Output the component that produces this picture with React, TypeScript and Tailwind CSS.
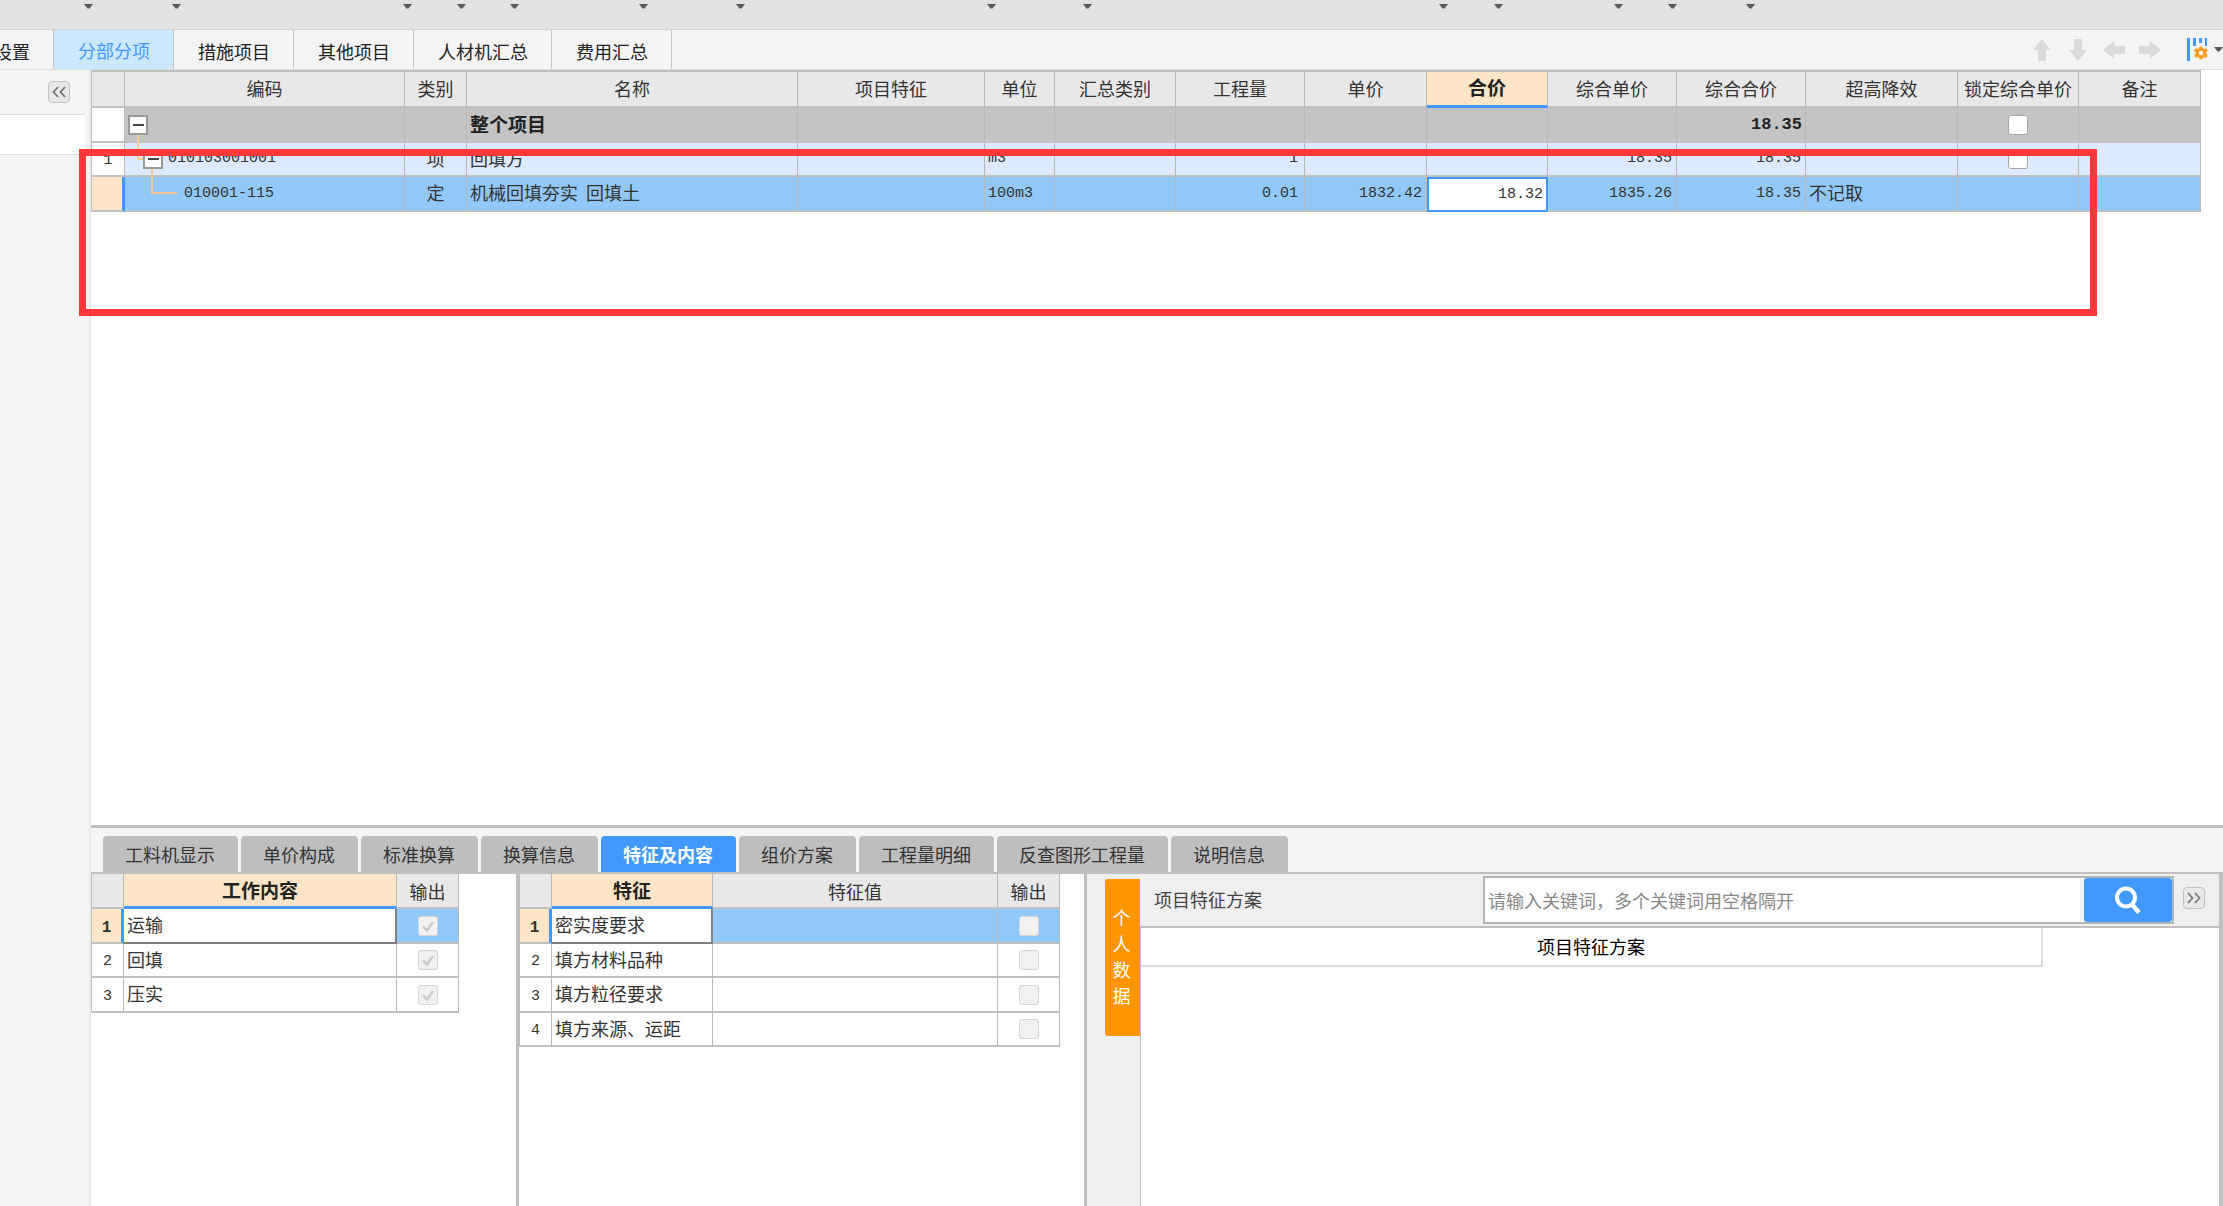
import React from "react";

const CJK = "font-['Noto_Sans_CJK_SC',sans-serif]";
const NUM = "font-['Liberation_Mono','Noto_Sans_CJK_SC',monospace] text-[15px]";

function Caret() {
  return (
    <svg width="9" height="5" viewBox="0 0 9 5" aria-hidden="true">
      <path d="M0 0H9L5.5 4.5H3.5Z" fill="#5a5a5a" />
    </svg>
  );
}

const TOOL_WIDTHS = [
  "w-[93px]", "w-[88px]", "w-[231px]", "w-[54px]", "w-[53px]", "w-[129px]", "w-[97px]",
  "w-[251px]", "w-[96px]", "w-[356px]", "w-[55px]", "w-[120px]", "w-[54px]", "w-[78px]",
];

function Toolbar() {
  return (
    <div className="flex h-[30px] border-b border-[#d2d2d2] bg-[#e2e2e2]">
      {TOOL_WIDTHS.map((w, i) => (
        <button key={i} type="button" aria-label="展开菜单" className={`flex h-full shrink-0 justify-end pt-[4px] ${w}`}>
          <Caret />
        </button>
      ))}
    </div>
  );
}

const ARROW = "M11 0L20 11H15V22H7V11H2Z";

function ArrowButton({ label, turn }: { label: string; turn: number }) {
  return (
    <button type="button" aria-label={label}>
      <svg width="22" height="22" viewBox="0 0 22 22" aria-hidden="true">
        <path d={ARROW} fill="#dadada" transform={`rotate(${turn} 11 11)`} />
      </svg>
    </button>
  );
}

function MainTabs() {
  const tabs = ["措施项目", "其他项目", "人材机汇总", "费用汇总"];
  return (
    <nav className="flex h-10 border-b border-[#dcdcdc] bg-[#f4f4f4] text-lg leading-6 text-[#222]">
      <button type="button" className="flex w-[54px] items-center justify-end overflow-hidden whitespace-nowrap border-r border-[#c4c4c4] pr-[23px] pt-[2px]">
        设置
      </button>
      <button type="button" className="border-r border-[#c4c4c4] bg-[#cce8ff] pl-6 pr-[23px] text-[#4199ff]">
        分部分项
      </button>
      {tabs.map((t) => (
        <button key={t} type="button" className="border-r border-[#c4c4c4] pl-6 pr-[23px] pt-[2px]">
          {t}
        </button>
      ))}
      <div className="ml-auto flex items-center gap-[14px]">
        <ArrowButton label="上移" turn={0} />
        <ArrowButton label="下移" turn={180} />
        <ArrowButton label="左移" turn={270} />
        <ArrowButton label="右移" turn={90} />
        <button type="button" aria-label="列设置" className="ml-3 flex items-center gap-[6px]">
          <svg width="21" height="23" viewBox="0 0 21 23" aria-hidden="true">
            <g fill="#4199ff">
              <rect x="0" y="0" width="3" height="23" />
              <rect x="6" y="0" width="3" height="8" />
              <rect x="12" y="0" width="3" height="5" />
              <rect x="18" y="0" width="2" height="8" />
            </g>
            <g stroke="#fd9d20" strokeWidth="4" strokeLinecap="round">
              <path d="M14 10.500V19.500M9.500 12.500L18.500 17.500M18.500 12.500L9.500 17.500" />
            </g>
            <circle cx="14" cy="15" r="5" fill="#fd9d20" />
            <circle cx="14" cy="15" r="2.3" fill="#f4f4f4" />
          </svg>
          <Caret />
        </button>
      </div>
    </nav>
  );
}

function ChevronButton({ label, right }: { label: string; right?: boolean }) {
  return (
    <button
      type="button"
      aria-label={label}
      className="flex h-[22px] w-[22px] shrink-0 items-center justify-center rounded-[4px] border border-[#c2c2c2] bg-[#e8e8e8]"
    >
      <svg width="14" height="12" viewBox="0 0 14 12" fill="none" stroke="#777" strokeWidth="1.8" aria-hidden="true">
        {right ? <path d="M1 1L5.5 6L1 11M8 1L12.500 6L8 11" /> : <path d="M6 1L1.500 6L6 11M13 1L8.500 6L13 11" />}
      </svg>
    </button>
  );
}

function Sidebar() {
  return (
    <aside className="w-[91px] shrink-0 border-r-2 border-[#e9e9e9] bg-[#f4f4f4]">
      <div className="flex h-[44px] items-center justify-end pr-[19px]">
        <ChevronButton label="收起" />
      </div>
      <div className="mr-1 h-[41px] border-y border-[#dcdcdc] bg-white" />
    </aside>
  );
}

function Check({ label, checked, disabled }: { label: string; checked?: boolean; disabled?: boolean }) {
  return (
    <label className="relative mx-auto block h-5 w-5">
      <input
        type="checkbox"
        aria-label={label}
        defaultChecked={checked}
        disabled={disabled}
        className="block h-5 w-5 appearance-none rounded-[3px] border border-[#a6a6a6] bg-white disabled:border-[#d6d6d6] disabled:bg-[#f1f1f1]"
      />
      {checked && (
        <svg className="absolute inset-0" width="20" height="20" viewBox="0 0 20 20" fill="none" aria-hidden="true">
          <path d="M5 10.500L9 14.500L15 6" stroke="#cccccc" strokeWidth="2.5" />
        </svg>
      )}
    </label>
  );
}

const COLS = [
  ["", "w-[33px]"], ["编码", "w-[280px]"], ["类别", "w-[62px]"], ["名称", "w-[331px]"],
  ["项目特征", "w-[187px]"], ["单位", "w-[70px]"], ["汇总类别", "w-[121px]"], ["工程量", "w-[129px]"],
  ["单价", "w-[122px]"], ["合价", "w-[121px]"], ["综合单价", "w-[129px]"], ["综合合价", "w-[129px]"],
  ["超高降效", "w-[152px]"], ["锁定综合单价", "w-[121px]"], ["备注", "w-[122px]"],
];

const LINE = "border-r border-b-2 border-b-[#c0c0c0] border-r-[#b8b8b8]";

function TreeToggle() {
  return (
    <button type="button" aria-label="折叠" className="relative flex h-5 w-5 items-center justify-center border-2 border-[#999] bg-white">
      <span className="h-[2px] w-[11px] bg-[#444]" />
    </button>
  );
}

function TreeLines({ d }: { d: string }) {
  return (
    <svg className="absolute left-0 top-0" width="60" height="36" viewBox="0 0 60 36" fill="none" aria-hidden="true">
      <path d={d} stroke="#f6cb92" strokeWidth="2" />
    </svg>
  );
}

function CostTable() {
  return (
    <table className="w-full table-fixed border-separate border-spacing-0 border-l border-t-2 border-[#c0c0c0] text-lg leading-6 text-[#333]">
      <colgroup>
        {COLS.map(([name, w]) => (
          <col key={name || "index"} className={w} />
        ))}
      </colgroup>
      <thead>
        <tr className="h-[36px]">
          {COLS.map(([name]) =>
            name === "合价" ? (
              <th key={name} className="whitespace-nowrap border-b-[3px] border-r border-b-[#4199ff] border-r-[#b8b8b8] bg-[#fee5c8] pb-[4px] text-[19px] font-bold text-[#222]">
                {name}
              </th>
            ) : (
              <th key={name || "index"} className={`${LINE} whitespace-nowrap bg-[#e8e8e8] pb-[2px] font-normal`}>
                {name}
              </th>
            )
          )}
        </tr>
      </thead>
      <tbody>
        <tr className="h-[35px] bg-[#c4c4c4] font-bold text-[#222]">
          <td className={`${LINE} bg-white`} />
          <td className={`${LINE} relative pl-[3px]`}>
            <TreeLines d="M13 26V35" />
            <TreeToggle />
          </td>
          <td className={LINE} />
          <td className={`${LINE} pb-[2px] pl-[3px] text-[19px]`}>整个项目</td>
          <td className={LINE} />
          <td className={LINE} />
          <td className={LINE} />
          <td className={LINE} />
          <td className={LINE} />
          <td className={LINE} />
          <td className={LINE} />
          <td className={`${LINE} pr-[3px] text-right font-['Liberation_Mono',monospace] text-[17px]`}>18.35</td>
          <td className={LINE} />
          <td className={LINE}><Check label="锁定综合单价 整个项目" /></td>
          <td className={LINE} />
        </tr>
        <tr className="h-[34px] bg-[#dce9fe]">
          <td className={`${LINE} bg-white pt-1 text-center ${NUM}`}>1</td>
          <td className={`${LINE} relative pl-[18px]`}>
            <TreeLines d="M13 -2V16H20M27 24V34" />
            <div className={`flex items-center gap-[5px] ${NUM}`}>
              <TreeToggle />
              <span>010103001001</span>
            </div>
          </td>
          <td className={`${LINE} pb-[2px] text-center`}>项</td>
          <td className={`${LINE} pb-[2px] pl-[3px]`}>回填方</td>
          <td className={LINE} />
          <td className={`${LINE} pl-[3px] ${NUM}`}>m3</td>
          <td className={LINE} />
          <td className={`${LINE} pr-[6px] text-right ${NUM}`}>1</td>
          <td className={LINE} />
          <td className={LINE} />
          <td className={`${LINE} pr-[4px] text-right ${NUM}`}>18.35</td>
          <td className={`${LINE} pr-[4px] text-right ${NUM}`}>18.35</td>
          <td className={LINE} />
          <td className={LINE}><Check label="锁定综合单价 回填方" /></td>
          <td className={LINE} />
        </tr>
        <tr className="h-[35px] bg-[#92c8f7]">
          <td className="border-b-2 border-r-[3px] border-b-[#c0c0c0] border-r-[#4199ff] bg-[#fee5c8]" />
          <td className={`${LINE} relative pl-[59px] ${NUM}`}>
            <TreeLines d="M27 -2V16H52" />
            010001-115
          </td>
          <td className={`${LINE} pb-[3px] text-center`}>定</td>
          <td className={`${LINE} whitespace-pre pb-[3px] pl-[3px]`}>机械回填夯实{"  "}回填土</td>
          <td className={LINE} />
          <td className={`${LINE} pl-[3px] ${NUM}`}>100m3</td>
          <td className={LINE} />
          <td className={`${LINE} pr-[6px] text-right ${NUM}`}>0.01</td>
          <td className={`${LINE} pr-[4px] text-right ${NUM}`}>1832.42</td>
          <td className="border-2 border-[#4199ff] bg-white">
            <input aria-label="合价" defaultValue="18.32" className={`block w-full bg-white pr-[3px] text-right outline-none ${NUM}`} />
          </td>
          <td className={`${LINE} pr-[4px] text-right ${NUM}`}>1835.26</td>
          <td className={`${LINE} pr-[4px] text-right ${NUM}`}>18.35</td>
          <td className={`${LINE} pb-[3px] pl-[3px]`}>不记取</td>
          <td className={LINE} />
          <td className={LINE} />
        </tr>
      </tbody>
    </table>
  );
}

function DetailTabs() {
  const tabs = ["工料机显示", "单价构成", "标准换算", "换算信息", "特征及内容", "组价方案", "工程量明细", "反查图形工程量", "说明信息"];
  return (
    <div className="flex h-[49px] items-end gap-[3px] border-b-2 border-t-[3px] border-[#c0c0c0] bg-[#f5f5f5] pl-3 text-lg leading-6">
      {tabs.map((t) => (
        <button
          key={t}
          type="button"
          className={
            t === "特征及内容"
              ? "h-9 rounded-t-[4px] bg-[#4199ff] pl-[22px] pr-[23px] font-bold text-white"
              : "h-9 rounded-t-[4px] bg-[#bebebe] pl-[22px] pr-[23px] text-[#333]"
          }
        >
          {t}
        </button>
      ))}
    </div>
  );
}

type DetailProps = {
  title: string;
  titleWidth: string;
  valueTitle?: string;
  rows: string[];
  checked?: boolean;
};

function DetailTable({ title, titleWidth, valueTitle, rows, checked }: DetailProps) {
  return (
    <table className="table-fixed border-separate border-spacing-0 border-l border-[#c0c0c0] text-lg leading-6 text-[#333]">
      <colgroup>
        <col className="w-8" />
        <col className={titleWidth} />
        {valueTitle && <col className="w-[285px]" />}
        <col className="w-[62px]" />
      </colgroup>
      <thead>
        <tr className="h-[35px]">
          <th className={`${LINE} bg-[#e8e8e8]`} />
          <th className="border-b-[3px] border-r border-b-[#4199ff] border-r-[#b8b8b8] bg-[#fee5c8] text-[19px] font-bold text-[#222]">{title}</th>
          {valueTitle && <th className={`${LINE} bg-[#e8e8e8] font-normal`}>{valueTitle}</th>}
          <th className={`${LINE} bg-[#e8e8e8] font-normal`}>输出</th>
        </tr>
      </thead>
      <tbody>
        {rows.map((row, i) => (
          <tr key={row} className={i === 0 ? "h-[35px] bg-[#92c8f7]" : i % 2 ? "h-[34px]" : "h-[35px]"}>
            <td
              className={
                i === 0
                  ? "border-b-2 border-r-[3px] border-b-[#c0c0c0] border-r-[#4199ff] bg-[#fee5c8] pt-1 text-center font-['Liberation_Mono',monospace] text-base font-bold"
                  : `${LINE} pt-1 text-center ${NUM}`
              }
            >
              {i + 1}
            </td>
            <td
              className={
                i === 0
                  ? "border-b-2 border-r-2 border-[#808080] bg-white pb-[3px] pl-[3px]"
                  : `${LINE} pb-[3px] pl-[3px]`
              }
            >
              {row}
            </td>
            {valueTitle && <td className={LINE} />}
            <td className={LINE}><Check label={`输出 ${row}`} checked={checked} disabled /></td>
          </tr>
        ))}
      </tbody>
    </table>
  );
}

function SchemePanel() {
  return (
    <section className="flex min-w-0 flex-1 border-r-4 border-[#c0c0c0] bg-[#efefef]">
      <div className="w-[53px] shrink-0 pl-[18px] pt-[5px]">
        <button type="button" className="flex h-[157px] w-full flex-col items-center justify-center rounded-l-[3px] bg-[#ff9500] pb-1 pr-[2px] text-lg leading-[26px] text-white">
          <span>个</span>
          <span>人</span>
          <span>数</span>
          <span>据</span>
        </button>
      </div>
      <div className="flex min-w-0 flex-1 flex-col">
        <form className="flex h-[52px] items-center pl-[14px] pr-[14px] text-lg text-[#444]" onSubmit={(e) => e.preventDefault()}>
          <label htmlFor="scheme-search" className="w-[329px] shrink-0 pb-[2px]">项目特征方案</label>
          <div className="flex h-[48px] flex-1 border-2 border-[#b4b4b4] bg-white">
            <input
              id="scheme-search"
              type="text"
              placeholder="请输入关键词，多个关键词用空格隔开"
              className="min-w-0 flex-1 border-r-4 border-[#f2f2f2] pl-[3px] outline-none placeholder:text-[#888]"
            />
            <button type="submit" aria-label="搜索" className="flex w-[88px] items-center justify-center rounded-[3px] bg-[#4199ff]">
              <svg width="26" height="28" viewBox="0 0 26 28" fill="none" stroke="#fff" aria-hidden="true">
                <circle cx="11" cy="11.500" r="9" strokeWidth="4" />
                <path d="M17 18.500L24 26.500" strokeWidth="4.500" />
              </svg>
            </button>
          </div>
          <div className="-mt-1 ml-[9px]">
            <ChevronButton label="展开" right />
          </div>
        </form>
        <div className="flex-1 border-l border-t-2 border-[#c0c0c0] bg-white pr-[176px]">
          <div className="h-[39px] border-b-2 border-r-2 border-[#dcdcdc] text-center text-lg leading-9 text-black">
            项目特征方案
          </div>
        </div>
      </div>
    </section>
  );
}

export default function App() {
  return (
    <div className={`relative flex min-h-screen flex-col overflow-hidden bg-white ${CJK}`}>
      <Toolbar />
      <MainTabs />
      <div className="flex flex-1">
        <Sidebar />
        <main className="flex min-w-0 flex-1 flex-col">
          <div className="flex-1 pr-[23px]">
            <CostTable />
          </div>
          <DetailTabs />
          <div className="flex min-h-[332px]">
            <div className="w-[425px] shrink-0">
              <DetailTable title="工作内容" titleWidth="w-[273px]" rows={["运输", "回填", "压实"]} checked />
            </div>
            <div className="w-[571px] shrink-0 border-x-[3px] border-[#c0c0c0]">
              <DetailTable
                title="特征"
                titleWidth="w-[161px]"
                valueTitle="特征值"
                rows={["密实度要求", "填方材料品种", "填方粒径要求", "填方来源、运距"]}
              />
            </div>
            <SchemePanel />
          </div>
        </main>
      </div>
      <div className="pointer-events-none absolute left-[79px] right-[126px] top-[149px] h-[167px] border-[7px] border-[#fc3838]" />
    </div>
  );
}
